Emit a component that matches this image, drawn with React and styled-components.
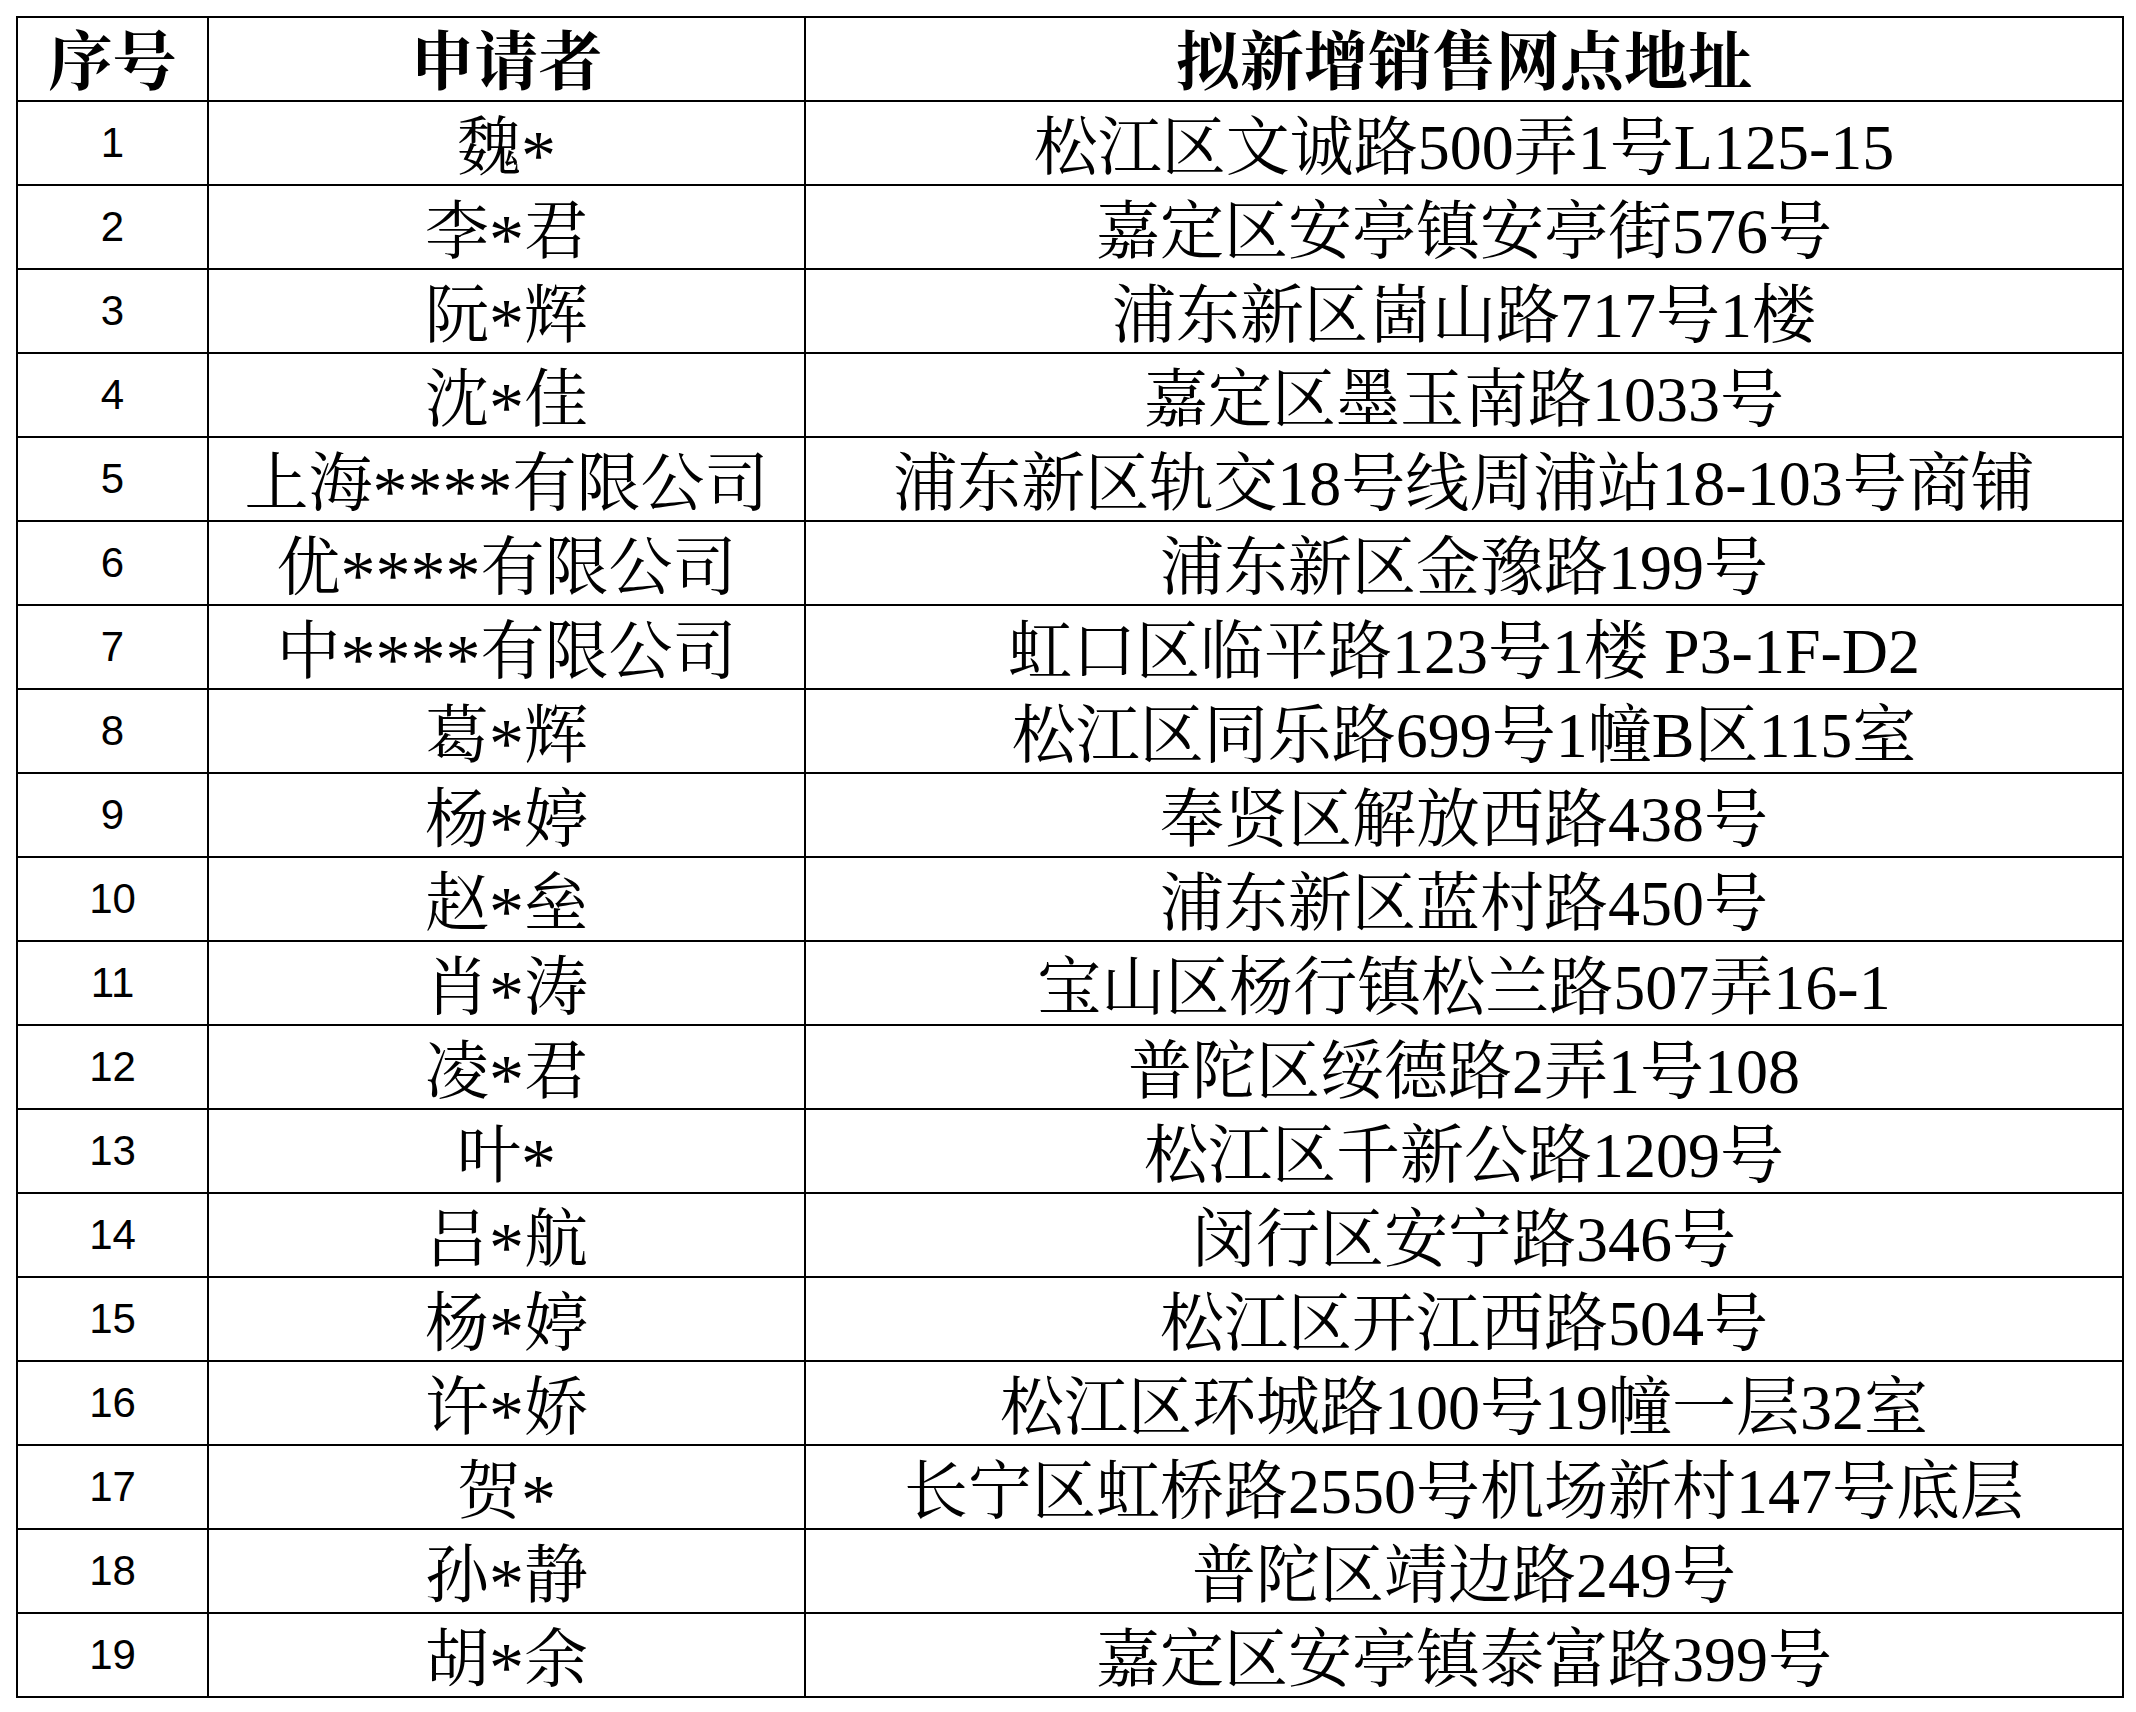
import React from "react";
import styled, { createGlobalStyle } from "styled-components";

const Global = createGlobalStyle`
  html, body { margin: 0; padding: 0; background: #fff; }
  body { width: 2136px; height: 1712px; overflow: hidden; }
`;

const Page = styled.div`
  padding: 16px 0 0 16px;
`;

const Table = styled.table`
  border-collapse: collapse;
  table-layout: fixed;
  width: 2106px;
  border: 2px solid #000;
`;

const Row = styled.tr`
  height: 84px;
`;

const cjk = `"Liberation Serif", "Noto Serif CJK SC", "Noto Sans CJK SC", serif`;

const HeadCell = styled.th`
  border: 2px solid #000;
  padding: 8px 0 0 0;
  text-align: center;
  vertical-align: middle;
  font-family: ${cjk};
  font-size: 64px;
  font-weight: 700;
  line-height: 1;
  color: #000;
  white-space: nowrap;
`;

const Cell = styled.td`
  border: 2px solid #000;
  padding: ${(p) => (p.$num ? "0" : "10px 0 0 0")};
  text-align: center;
  vertical-align: middle;
  font-family: ${(p) => (p.$num ? `"Liberation Sans", Arial, sans-serif` : cjk)};
  font-size: ${(p) => (p.$num ? "42px" : "64px")};
  line-height: 1;
  color: #000;
  white-space: nowrap;
`;

const Star = styled.span`
  font-size: 70px;
  line-height: 0;
  vertical-align: -10px;
`;

const rows = [
  ["魏*", "松江区文诚路500弄1号L125-15"],
  ["李*君", "嘉定区安亭镇安亭街576号"],
  ["阮*辉", "浦东新区崮山路717号1楼"],
  ["沈*佳", "嘉定区墨玉南路1033号"],
  ["上海****有限公司", "浦东新区轨交18号线周浦站18-103号商铺"],
  ["优****有限公司", "浦东新区金豫路199号"],
  ["中****有限公司", "虹口区临平路123号1楼 P3-1F-D2"],
  ["葛*辉", "松江区同乐路699号1幢B区115室"],
  ["杨*婷", "奉贤区解放西路438号"],
  ["赵*垒", "浦东新区蓝村路450号"],
  ["肖*涛", "宝山区杨行镇松兰路507弄16-1"],
  ["凌*君", "普陀区绥德路2弄1号108"],
  ["叶*", "松江区千新公路1209号"],
  ["吕*航", "闵行区安宁路346号"],
  ["杨*婷", "松江区开江西路504号"],
  ["许*娇", "松江区环城路100号19幢一层32室"],
  ["贺*", "长宁区虹桥路2550号机场新村147号底层"],
  ["孙*静", "普陀区靖边路249号"],
  ["胡*余", "嘉定区安亭镇泰富路399号"],
];

function Name({ text }) {
  const parts = text.split(/(\*+)/);
  return parts.map((part, i) =>
    part.startsWith("*") ? <Star key={i}>{part}</Star> : <React.Fragment key={i}>{part}</React.Fragment>
  );
}

export default function App() {
  return (
    <>
      <Global />
      <Page>
        <Table>
          <colgroup>
            <col style={{ width: 191 }} />
            <col style={{ width: 597 }} />
            <col style={{ width: 1318 }} />
          </colgroup>
          <thead>
            <Row>
              <HeadCell>序号</HeadCell>
              <HeadCell>申请者</HeadCell>
              <HeadCell>拟新增销售网点地址</HeadCell>
            </Row>
          </thead>
          <tbody>
            {rows.map(([name, addr], i) => (
              <Row key={i}>
                <Cell $num>{i + 1}</Cell>
                <Cell><Name text={name} /></Cell>
                <Cell>{addr}</Cell>
              </Row>
            ))}
          </tbody>
        </Table>
      </Page>
    </>
  );
}
